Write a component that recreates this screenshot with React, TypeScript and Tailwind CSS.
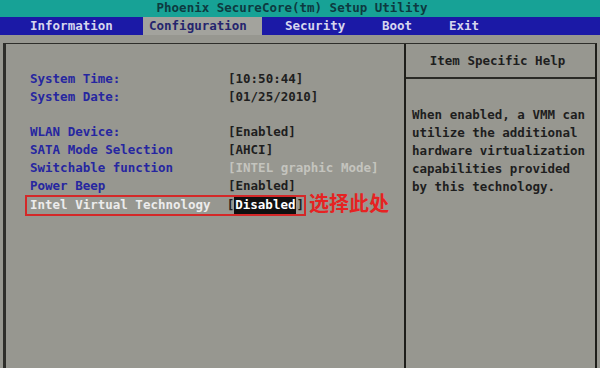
import React from "react";

const menu = [
  { name: "Information", active: false, pl: "pl-[30px]", w: "w-[143px]" },
  { name: "Configuration", active: true, pl: "pl-[6px]", w: "w-[119px]" },
  { name: "Security", active: false, pl: "pl-[23px]", w: "w-[120px]" },
  { name: "Boot", active: false, pl: "pl-[0px]", w: "w-[67px]" },
  { name: "Exit", active: false, pl: "pl-[0px]", w: "w-[60px]" },
];

const Row = ({ label, value, dim }: { label: string; value: string; dim?: boolean }) => (
  <div className="flex h-[18px] items-center">
    <span className="w-[198px] text-[#2626a0]">{label}</span>
    <span className={dim ? "text-[#c4c4be]" : "text-[#1e1e1e]"}>{value}</span>
  </div>
);

export default function App() {
  return (
    <div
      className="flex h-[368px] w-[600px] flex-col overflow-hidden bg-[#979790] text-[12.5px] font-bold leading-none"
      style={{ fontFamily: '"DejaVu Sans Mono", "Liberation Mono", monospace' }}
    >
      {/* title */}
      <div className="flex h-[17px] items-center justify-center bg-[#17a296] pr-[16px] text-[#0d3a40]">
        Phoenix SecureCore(tm) Setup Utility
      </div>

      {/* menu */}
      <div className="flex h-[18px] bg-[#1b19a6]">
        {menu.map((m) => (
          <div
            key={m.name}
            className={`flex items-center ${m.w} ${m.pl} ${
              m.active ? "bg-[#a3a39d] text-[#25256e]" : "text-[#d6d6ee]"
            }`}
          >
            {m.name}
          </div>
        ))}
      </div>

      {/* frame */}
      <div className="flex flex-1 pl-[3px] pr-[3px] pt-[8px]">
        <div className="flex flex-1 border-l-[3px] border-r-[2px] border-t-[1px] border-l-[#2e2e2a] border-r-[#1e1e1a] border-t-[#2e2e2a]">
          {/* left */}
          <div className="flex w-[398px] flex-col pl-[24px] pt-[26px]">
            <Row label="System Time:" value="[10:50:44]" />
            <Row label="System Date:" value="[01/25/2010]" />
            <div className="h-[17px]" />
            <Row label="WLAN Device:" value="[Enabled]" />
            <Row label="SATA Mode Selection" value="[AHCI]" />
            <Row label="Switchable function" value="[INTEL graphic Mode]" dim />
            <Row label="Power Beep" value="[Enabled]" />
            <div className="relative -ml-[5px] flex h-[21px] w-[281px] items-center border-2 border-[#d42828] pl-[3px]">
              <span className="w-[198px] text-[#ececec]">Intel Virtual Technology</span>
              <span className="flex items-center text-[#1e1e1e]">
                [<span className="bg-[#101010] px-[1px] py-[2px] text-white">Disabled</span>]
              </span>
              <span
                className="absolute left-[282px] top-[-4px] whitespace-nowrap text-[20px] font-bold text-[#e62222]"
                style={{ fontFamily: '"Noto Sans CJK SC", sans-serif' }}
              >
                选择此处
              </span>
            </div>
          </div>

          {/* right */}
          <div className="flex flex-1 flex-col border-l-[2px] border-l-[#1e1e1a]">
            <div className="flex h-[35px] items-center justify-center border-b-[2px] border-b-[#2a2a26] pr-[6px] pt-[2px] text-[#1e1e1e]">
              Item Specific Help
            </div>
            <div className="flex flex-col pl-[6px] pt-[27px] text-[#1e1e1e]">
              <div className="flex h-[18px] items-center">When enabled, a VMM can</div>
              <div className="flex h-[18px] items-center">utilize the additional</div>
              <div className="flex h-[18px] items-center">hardware virtualization</div>
              <div className="flex h-[18px] items-center">capabilities provided</div>
              <div className="flex h-[18px] items-center">by this technology.</div>
            </div>
          </div>
        </div>
      </div>
    </div>
  );
}
